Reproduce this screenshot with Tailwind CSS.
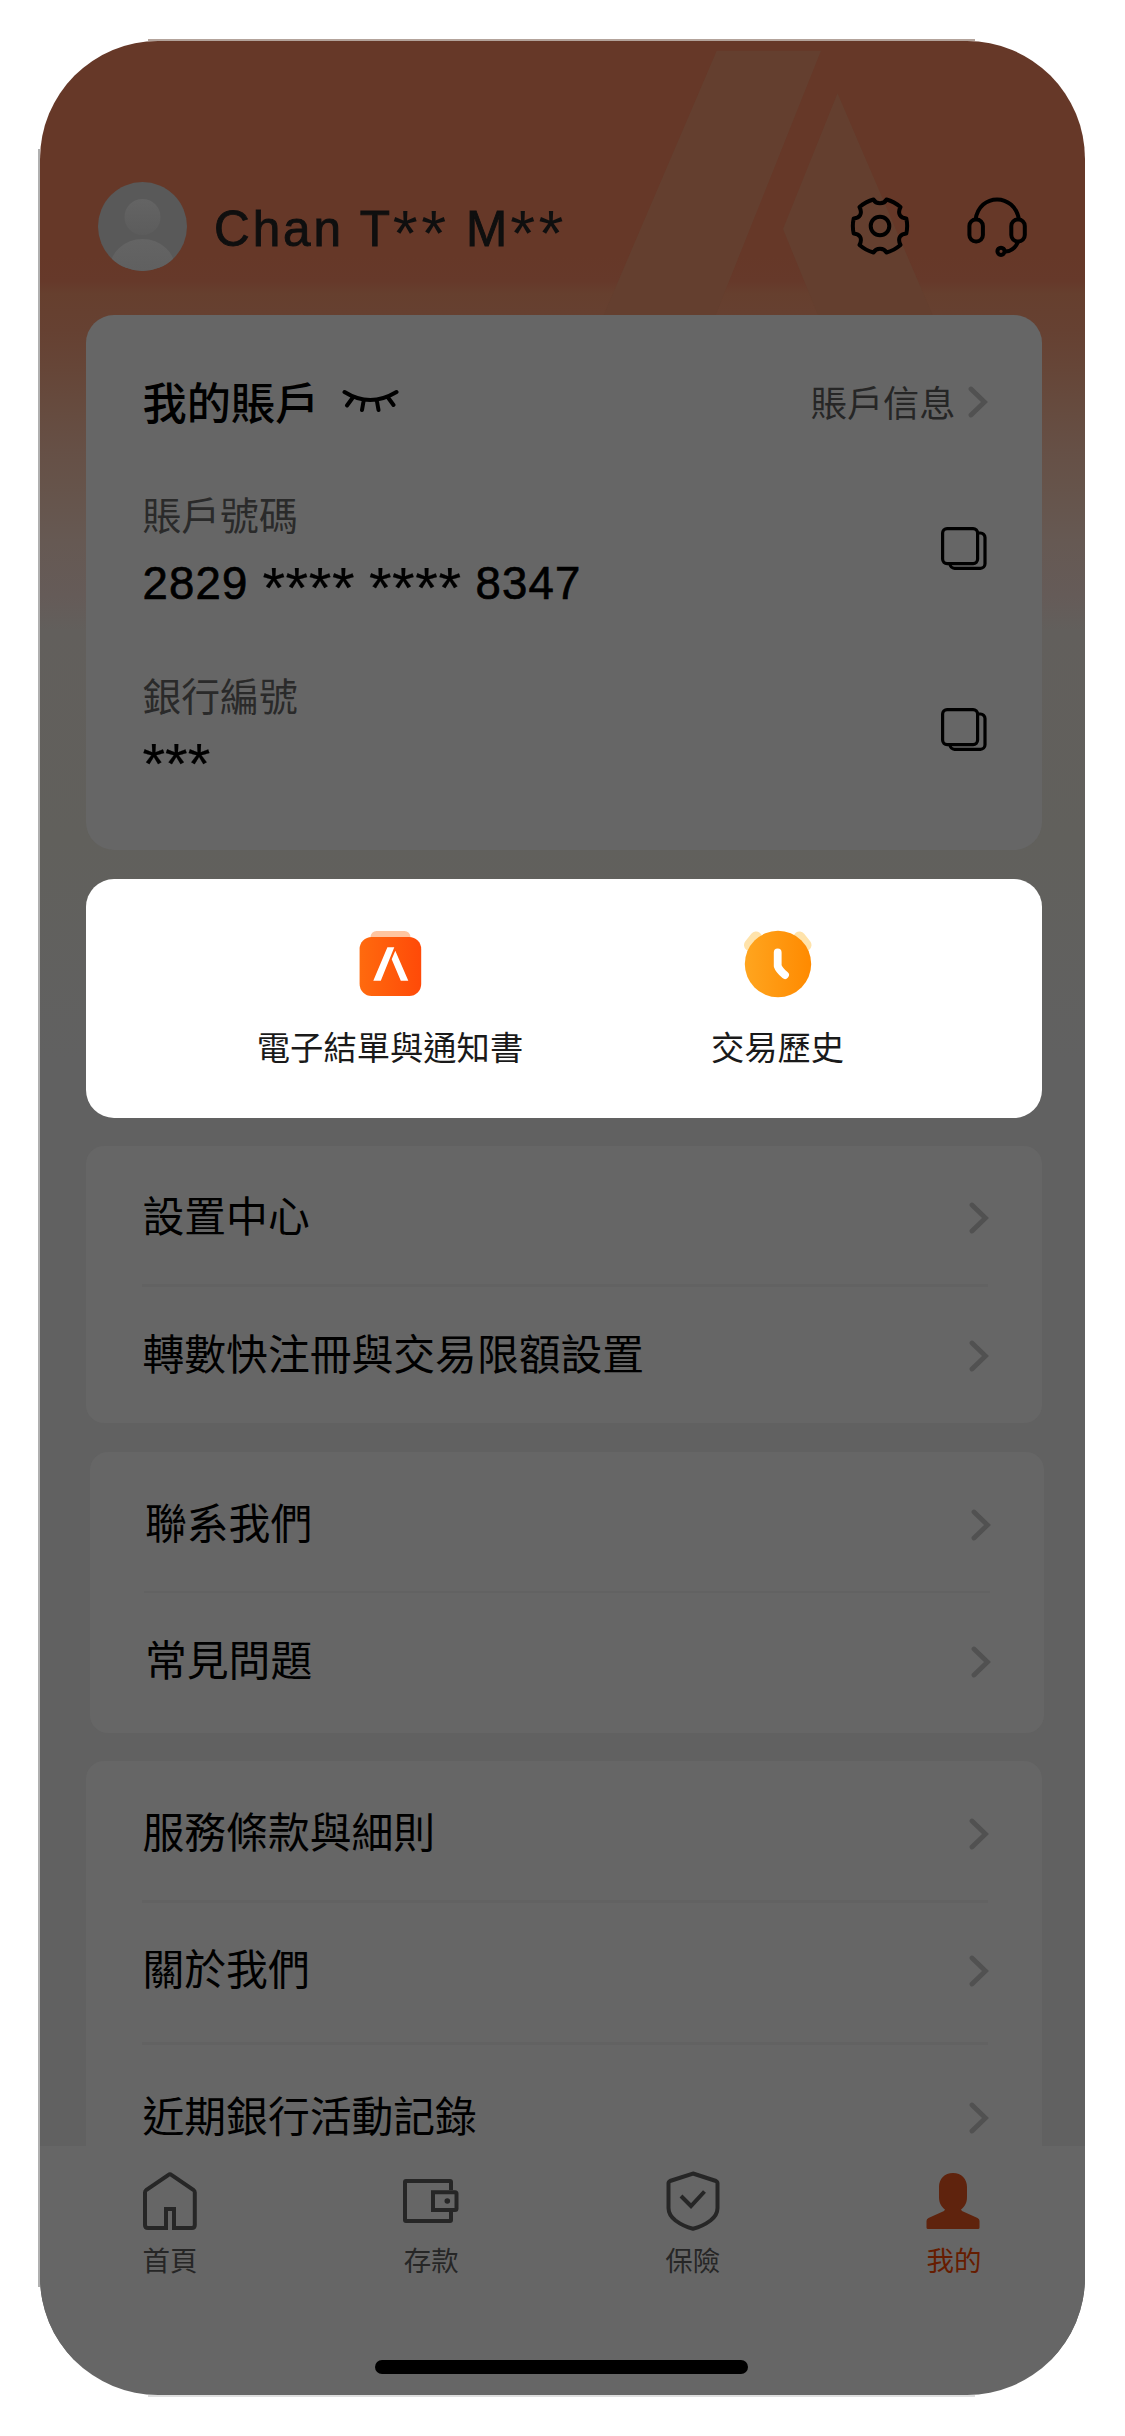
<!DOCTYPE html>
<html lang="zh-Hant">
<head>
<meta charset="utf-8">
<title>我的</title>
<script src="https://cdn.jsdelivr.net/npm/@tailwindcss/browser@4"></script>
</head>
<body class="bg-white font-['Noto_Sans_CJK_TC',sans-serif] overflow-hidden">
<svg class="hidden"><defs>
  <symbol id="chev" viewBox="0 0 20 32"><path d="M3 3L16.500 16L3 29" fill="none" stroke="#515151" stroke-width="4.800" stroke-linecap="round"/></symbol>
  <symbol id="copy" viewBox="0 0 46 43"><g fill="none" stroke="#000" stroke-width="3.200"><rect x="1.600" y="1.600" width="35" height="35" rx="4.500"/><path d="M37 6h2.500a4.500 4.500 0 0 1 4.500 4.500V36.800a4.500 4.500 0 0 1-4.500 4.500H13.500a4.500 4.500 0 0 1-4.500-4.500"/></g></symbol>
</defs></svg>

<div class="relative ml-[38px] mt-[39px] h-[2358px] w-[1047px] py-[2px] pl-[2px]">
<div class="absolute inset-x-[110px] top-0 h-[2px] bg-[#b3a39b]"></div>
<div class="absolute inset-x-[110px] bottom-0 h-[2px] bg-[#dedede]"></div>
<div class="absolute inset-y-[110px] left-0 w-[2px] bg-[#b0b0b0]"></div>
<div class="flex h-[2354px] w-[1045px] flex-col overflow-hidden rounded-[118px] bg-[linear-gradient(#663828_0px,#663828_215px,#66392a_240px,#663f2e_252px,#664132_290px,#664638_330px,#664c40_375px,#665046_410px,#66544b_450px,#665953_500px,#655b58_555px,#625f5c_590px,#61605c_800px,#616161_1020px,#616161_2105px,#666666_2105px)]">

  <header class="relative flex h-[274px] shrink-0 items-start pt-[141px] pl-[57.500px]">
    <svg class="absolute top-0 left-0" width="1045" height="274" viewBox="40 41 1045 274">
      <path d="M716.700 50.700H821L715.600 315H603.700ZM837.500 93.300L932.600 315H818L783 229Z" fill="#643f2f"/>
    </svg>
    <svg class="relative shrink-0" width="89" height="89" viewBox="0 0 89 89">
      <defs><clipPath id="av"><circle cx="44.500" cy="44.500" r="44.500"/></clipPath>
      <linearGradient id="avg" x1="0" y1="0" x2="0" y2="1"><stop offset="0" stop-color="#646464"/><stop offset="1" stop-color="#5c5c5c"/></linearGradient></defs>
      <g clip-path="url(#av)"><rect width="89" height="89" fill="#595959"/><circle cx="44.500" cy="35" r="18" fill="url(#avg)"/><ellipse cx="44.500" cy="88" rx="33" ry="31" fill="url(#avg)"/></g>
    </svg>
    <div class="relative ml-[27.500px] w-[600px] pt-[19px] font-['Liberation_Sans',sans-serif] text-[49.500px] leading-[56px] tracking-[2.900px] whitespace-nowrap text-[#0f0f0f] [-webkit-text-stroke:0.900px_#0f0f0f]">Chan T<span class="align-[-10px] text-[64px] leading-[0] tracking-[3.400px] [-webkit-text-stroke:0px]">**</span> M<span class="align-[-10px] text-[64px] leading-[0] tracking-[3.400px] [-webkit-text-stroke:0px]">**</span></div>
    <svg class="relative mt-[14px] ml-[36px] shrink-0" width="60" height="60" viewBox="-30 -30 60 60" fill="none" stroke="#000" stroke-width="4" stroke-linejoin="round">
      <path d="M-6.500 -26.500C-4 -21.500 4 -21.500 6.500 -26.500Q14 -24.500 20.500 -19C17 -12 20.500 -8 26.300 -7.500Q28 0 26.300 7.500C20.500 8 17 12 20.500 19Q14 24.500 6.500 26.500C4 21.500 -4 21.500 -6.500 26.500Q-14 24.500 -20.500 19C-17 12 -20.500 8 -26.300 7.500Q-28 0 -26.300 -7.500C-20.500 -8 -17 -12 -20.500 -19Q-14 -24.500 -6.500 -26.500Z"/><circle r="9.300"/>
    </svg>
    <svg class="relative mt-[13px] ml-[56px] shrink-0" width="62" height="64" viewBox="966 194 62 64" fill="none" stroke="#000" stroke-width="4">
      <rect x="969.400" y="218.500" width="13.500" height="22" rx="6.500"/><rect x="1011.300" y="218.500" width="13.500" height="22" rx="6.500"/>
      <path d="M975.500 219C979 191.500 1015 191.500 1019 219M1018 241Q1014 250 1005.500 250.500"/><circle cx="1001" cy="250.300" r="3.600"/>
    </svg>
  </header>

  <main class="ml-[46px] flex w-[956px] shrink-0 flex-col">
    <section class="flex h-[535px] flex-col rounded-[28px] bg-[#666666] pr-[55.500px] pl-[56.500px]">
      <div class="mt-[60px] flex h-[52px] items-center">
        <h1 class="text-[44.200px] leading-[52px] font-medium">我的賬戶</h1>
        <svg class="ml-[21.500px]" width="58" height="24" viewBox="341 389 58 24" fill="none" stroke="#000" stroke-width="4" stroke-linecap="round"><path d="M344.500 392Q370 408 396.500 392M352.500 398L347 405.500M363.500 401.500L362 410M377 401.500L378.500 410M388 397.500L393.500 405"/></svg>
        <span class="ml-auto text-[36.200px] leading-[52px] text-[#262626]">賬戶信息</span>
        <svg class="mt-[2px] -mr-[1px] ml-[12px]" width="20" height="32"><use href="#chev"/></svg>
      </div>
      <div class="mt-[58px] flex h-[124px] justify-between">
        <div>
          <div class="pt-[3px] text-[38.800px] leading-[50px] text-[#2a2a2a]">賬戶號碼</div>
          <div class="mt-[20px] font-['Liberation_Sans',sans-serif] text-[45.500px] leading-[52px] tracking-[1.200px] whitespace-nowrap [-webkit-text-stroke:0.7px_#000]">2829 <span class="align-[-9px] text-[58px] leading-[0] tracking-[0.600px] [-webkit-text-stroke:0.2px_#000]">****</span> <span class="align-[-9px] text-[58px] leading-[0] tracking-[0.600px] [-webkit-text-stroke:0.2px_#000]">****</span> 8347</div>
        </div>
        <svg class="mt-[42px]" width="46" height="43"><use href="#copy"/></svg>
      </div>
      <div class="mt-[57px] flex h-[124px] justify-between">
        <div>
          <div class="pt-[3px] text-[38.800px] leading-[50px] text-[#2a2a2a]">銀行編號</div>
          <div class="mt-[15px] font-['Liberation_Sans',sans-serif] text-[45.500px] leading-[52px] [-webkit-text-stroke:0.2px_#000]"><span class="align-[-9px] text-[58px] leading-[0]">***</span></div>
        </div>
        <svg class="mt-[42px]" width="46" height="43"><use href="#copy"/></svg>
      </div>
    </section>

    <section class="mt-[29px] flex h-[239px] rounded-[28px] bg-white pl-[110.500px] text-[#1a1a1a]">
      <div class="flex w-[387px] flex-col items-center pt-[49px]">
        <svg width="68" height="70" viewBox="356 928 68 70">
          <defs><linearGradient id="og"><stop offset="0" stop-color="#ff6a0e"/><stop offset="1" stop-color="#ff4a08"/></linearGradient></defs>
          <rect x="370.500" y="931" width="40" height="20" rx="6" fill="#ffc5a0"/><rect x="359.600" y="937" width="61.600" height="59" rx="12" fill="url(#og)"/>
          <path d="M387.400 947.300H394.300L380.800 980.700H373.300ZM395.300 950.700L408.300 980.700H400.800L391.700 959.300Z" fill="#fff"/>
        </svg>
        <div class="mt-[23px] text-[33.300px] leading-[50px]">電子結單與通知書</div>
      </div>
      <div class="flex w-[388px] flex-col items-center pt-[49px]">
        <svg width="72" height="70" viewBox="742 929 72 70">
          <defs><linearGradient id="yg"><stop offset="0" stop-color="#ffa51f"/><stop offset="1" stop-color="#ff8a00"/></linearGradient></defs>
          <path d="M750 946L756 938.500M805.500 946L799.500 938.500" stroke="#ffe3ab" stroke-width="12" stroke-linecap="round"/><circle cx="778" cy="965" r="33.200" fill="url(#yg)"/>
          <path d="M777.700 953.500V967Q779 971 785 976" fill="none" stroke="#fff" stroke-width="7.800" stroke-linecap="round" stroke-linejoin="round"/>
        </svg>
        <div class="mt-[23px] text-[33.300px] leading-[50px]">交易歷史</div>
      </div>
    </section>

    <section class="mt-[28px] h-[277px] rounded-[18px] bg-[#666666] pr-[54.500px] pl-[55.500px] text-[41.800px] leading-[60px]">
      <div class="flex h-[141px] items-center justify-between border-b-[3px] border-[#626262] pl-[1px]"><span class="-mt-[2px]">設置中心</span><svg class="mt-[6px] -mr-[1px]" width="20" height="32"><use href="#chev"/></svg></div>
      <div class="flex h-[133px] items-center justify-between pl-[1px]"><span class="-mt-[4px]">轉數快注冊與交易限額設置</span><svg class="mt-[4px] -mr-[1px]" width="20" height="32"><use href="#chev"/></svg></div>
    </section>

    <section class="mt-[29px] ml-[4px] h-[281px] w-[954px] rounded-[18px] bg-[#666666] pr-[54px] pl-[54px] text-[41.800px] leading-[60px]">
      <div class="flex h-[141px] items-center justify-between border-b-2 border-[#626262] pl-[1px]"><span class="-mt-[2px]">聯系我們</span><svg class="mt-[6px] -mr-[1px]" width="20" height="32"><use href="#chev"/></svg></div>
      <div class="flex h-[133px] items-center justify-between pl-[1px]"><span class="-mt-[4px]">常見問題</span><svg class="mt-[4px] -mr-[1px]" width="20" height="32"><use href="#chev"/></svg></div>
    </section>

    <section class="mt-[28px] h-[386px] rounded-t-[18px] bg-[#666666] pr-[54.500px] pl-[55.500px] text-[41.800px] leading-[60px]">
      <div class="flex h-[142px] items-center justify-between border-b-[3px] border-[#626262] pl-[1px]"><span class="-mt-[2px]">服務條款與細則</span><svg class="mt-[6px] -mr-[1px]" width="20" height="32"><use href="#chev"/></svg></div>
      <div class="flex h-[142px] items-center justify-between border-b-[3px] border-[#626262] pb-[8px] pl-[1px]"><span class="-mt-[4px]">關於我們</span><svg class="mt-[4px] -mr-[1px]" width="20" height="32"><use href="#chev"/></svg></div>
      <div class="mt-[40px] flex h-[60px] items-center justify-between pl-[1px]"><span class="-mt-[2px]">近期銀行活動記錄</span><svg class="mt-[6px] -mr-[1px]" width="20" height="32"><use href="#chev"/></svg></div>
    </section>
  </main>

  <nav class="flex h-[213px] shrink-0 justify-between bg-[#666666] pt-[21px] pr-[100px] pl-[99px] text-[27.500px] leading-[40px] text-[#262626]">
    <div class="flex w-[62px] flex-col items-center">
      <svg width="60" height="66" viewBox="140 2168 60 66" fill="none" stroke="#262626" stroke-width="4"><path d="M168 2228H148Q145 2228 145 2225V2192.500Q145 2191 146.500 2189.800L168.500 2174.800Q169.900 2173.700 171.400 2174.800L193.300 2189.800Q194.800 2191 194.800 2192.500V2225Q194.800 2228 191.800 2228H174V2209H166V2228"/></svg>
      <div class="mt-[5px]">首頁</div>
    </div>
    <div class="flex w-[62px] flex-col items-center">
      <svg width="60" height="66" viewBox="402 2168 60 66" fill="none" stroke="#262626" stroke-width="4"><path d="M452 2190V2182Q452 2181 451 2181H407Q406 2181 406 2182V2220Q406 2221 407 2221H451Q452 2221 452 2220V2212"/><path d="M434 2192.300H456Q457.500 2192.300 457.500 2193.800V2208.500Q457.500 2210 456 2210H434Z"/><circle cx="448.300" cy="2201" r="2.800" fill="#262626" stroke="none"/></svg>
      <div class="mt-[5px]">存款</div>
    </div>
    <div class="flex w-[62px] flex-col items-center">
      <svg width="60" height="66" viewBox="663.500 2168 60 66" fill="none" stroke="#262626" stroke-width="4"><path d="M693.500 2173.500L716.500 2181Q718 2181.600 718 2183.500V2208Q718 2215 711 2220.500Q703 2226.500 693.500 2228.700Q684 2226.500 676 2220.500Q669 2215 669 2208V2183.500Q669 2181.600 670.500 2181Z"/><path d="M681.500 2196L691.500 2206L705 2191.500"/></svg>
      <div class="mt-[5px]">保險</div>
    </div>
    <div class="flex w-[62px] flex-col items-center text-[#661c00]">
      <svg width="60" height="66" viewBox="923.500 2168 60 66" fill="#5f230d"><path d="M952.500 2173C961 2173 966.500 2179 966.500 2187V2197C966.500 2203 964 2207 960.500 2209.500L961.500 2211L977 2218Q979 2219 979 2221V2227.500Q979 2229 977.500 2229H927.500Q926 2229 926 2227.500V2221Q926 2219 928 2218L943.500 2211L944.500 2209.500C941 2207 938.500 2203 938.500 2197V2187C938.500 2179 944 2173 952.500 2173Z"/></svg>
      <div class="mt-[5px]">我的</div>
    </div>
  </nav>
  <div class="ml-[334.500px] h-[14px] w-[373px] shrink-0 rounded-full bg-black"></div>
</div>
</div>
</body>
</html>
